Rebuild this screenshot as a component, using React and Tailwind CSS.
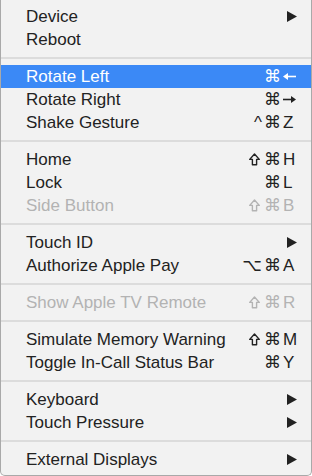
import React from 'react'

// menu rows: sep = separator line
const items = [
  { label: 'Device', sub: true },
  { label: 'Reboot' },
  { sep: true },
  { label: 'Rotate Left', mods: ['cmd'], key: 'left', active: true },
  { label: 'Rotate Right', mods: ['cmd'], key: 'right' },
  { label: 'Shake Gesture', mods: ['^', 'cmd'], key: 'Z' },
  { sep: true },
  { label: 'Home', mods: ['shift', 'cmd'], key: 'H' },
  { label: 'Lock', mods: ['cmd'], key: 'L' },
  { label: 'Side Button', mods: ['shift', 'cmd'], key: 'B', disabled: true },
  { sep: true },
  { label: 'Touch ID', sub: true },
  { label: 'Authorize Apple Pay', mods: ['⌥', 'cmd'], key: 'A' },
  { sep: true },
  { label: 'Show Apple TV Remote', mods: ['shift', 'cmd'], key: 'R', disabled: true },
  { sep: true },
  { label: 'Simulate Memory Warning', mods: ['shift', 'cmd'], key: 'M' },
  { label: 'Toggle In-Call Status Bar', mods: ['cmd'], key: 'Y' },
  { sep: true },
  { label: 'Keyboard', sub: true },
  { label: 'Touch Pressure', sub: true },
  { sep: true },
  { label: 'External Displays', sub: true },
]

function Submenu() {
  return (
    <svg width="10" height="11" viewBox="0 0 10 11">
      <polygon points="0,0 10,5.5 0,11" fill="currentColor" />
    </svg>
  )
}

function Shift() {
  return (
    <svg width="11" height="13" viewBox="0 0 11 13" className="mr-[4px]">
      <path d="M5.5 1 L10.3 6.4 H7.6 V11.8 H3.4 V6.4 H0.7 Z" fill="none" stroke="currentColor" strokeWidth="1.4" strokeLinejoin="round" />
    </svg>
  )
}

function ArrowKey({ dir }) {
  return (
    <svg width="13" height="9" viewBox="0 0 13 9" style={{ transform: dir === 'right' ? 'scaleX(-1)' : undefined }}>
      <line x1="2" y1="4.5" x2="13" y2="4.5" stroke="currentColor" strokeWidth="1.6" />
      <polygon points="0,4.5 5,1 5,8" fill="currentColor" />
    </svg>
  )
}

function Mod({ m }) {
  if (m === 'shift') return <Shift />
  if (m === 'cmd') return <span className="mr-[2px]">⌘</span>
  return <span className="mr-[2px]">{m}</span>
}

function Row({ item }) {
  const text = item.active ? 'text-white' : item.disabled ? 'text-[#b3b3b3]' : 'text-[#222222]'
  return (
    <div className={`h-[23px] flex items-center pl-[25px] pr-[14px] ${item.active ? 'bg-[#3b89f6]' : ''} ${text}`}>
      <span className="flex-1 leading-none">{item.label}</span>
      {item.sub && <Submenu />}
      {item.key && (
        <span className="flex items-center leading-none">
          {item.mods.map((m, i) => (
            <Mod key={i} m={m} />
          ))}
          <span className="w-[14px] text-left flex items-center">
            {item.key === 'left' || item.key === 'right' ? <ArrowKey dir={item.key} /> : item.key}
          </span>
        </span>
      )}
    </div>
  )
}

export default function App() {
  return (
    <div className="w-[312px] h-[476px] bg-white">
      <div className="h-[476px] bg-[#f2f2f2] border-x border-b border-[#a9a9a9] rounded-b-[5px] pt-[5px] text-[17px] font-['Liberation_Sans','DejaVu_Sans',sans-serif]">
        {items.map((item, i) =>
          item.sep ? (
            <div key={i} className="h-[14px] flex items-center">
              <div className="w-full h-[2px] bg-[#dcdcdc]" />
            </div>
          ) : (
            <Row key={i} item={item} />
          )
        )}
      </div>
    </div>
  )
}
